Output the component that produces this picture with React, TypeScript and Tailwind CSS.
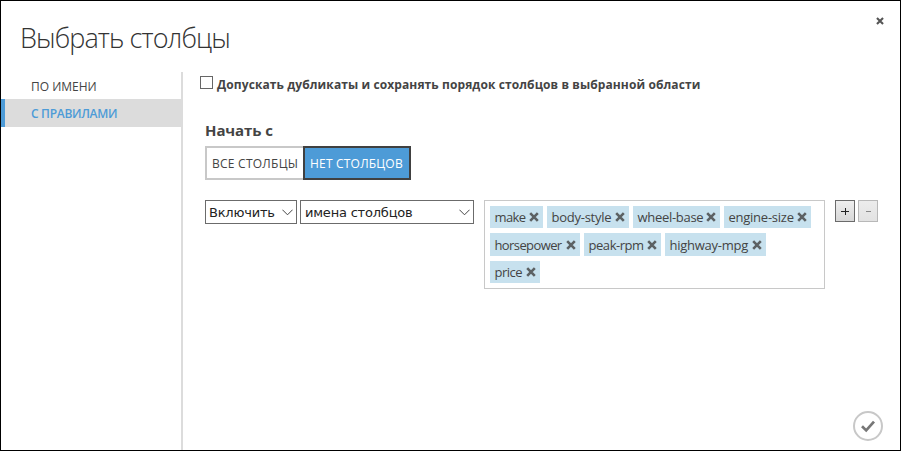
const rows = [
  {
    height: 'h-[22px]',
    chips: [
      { name: 'make', width: 'w-[53px]', tracking: 'tracking-[-0.65px]' },
      { name: 'body-style', width: 'w-[82px]', tracking: 'tracking-[-0.25px]' },
      { name: 'wheel-base', width: 'w-[87px]', tracking: 'tracking-[-0.3px]' },
      { name: 'engine-size', width: 'w-[87px]', tracking: 'tracking-[-0.25px]' },
    ],
  },
  {
    height: 'h-[23px]',
    chips: [
      { name: 'horsepower', width: 'w-[90px]', tracking: 'tracking-[-0.6px]' },
      { name: 'peak-rpm', width: 'w-[77px]', tracking: 'tracking-[-0.45px]' },
      { name: 'highway-mpg', width: 'w-[101px]', tracking: 'tracking-[-0.25px]' },
    ],
  },
  { height: 'h-[22px]', chips: [{ name: 'price', width: 'w-[50px]', tracking: 'tracking-[-0.5px]' }] },
];

function Cross({ className }: { className: string }) {
  return (
    <svg className={className} viewBox="0 0 10 10" fill="none" stroke="currentColor" strokeWidth="2.6">
      <path d="M1.2 1.2L8.8 8.8M8.8 1.2L1.2 8.8" />
    </svg>
  );
}

function Chip({ name, width, tracking }: { name: string; width: string; tracking: string }) {
  return (
    <div className={`flex h-full items-center justify-between bg-[#c7e1ee] pl-[4.5px] pr-[4px] ${width}`}>
      <span className={`whitespace-nowrap text-[13px] leading-[22px] ${tracking}`}>{name}</span>
      <Cross className="size-[10px] shrink-0 text-[#5c6163]" />
    </div>
  );
}

function Select({ label, width, inset }: { label: string; width: string; inset: string }) {
  return (
    <div className={`flex h-6 items-center justify-between border border-[#6b6b6b] pr-[3px] text-[#222] ${inset} ${width}`}>
      <span className="whitespace-nowrap pt-[2px] font-['DejaVu_Sans',sans-serif] text-[13px] leading-[20px] tracking-[-0.2px]">{label}</span>
      <svg className="h-[7px] w-[11px] shrink-0" viewBox="0 0 11 7" fill="none" stroke="#444" strokeWidth="1">
        <path d="M0.4 0.7L5.5 5.8L10.6 0.7" />
      </svg>
    </div>
  );
}

export default function App() {
  return (
    <div className="flex h-[451px] w-[901px] flex-col overflow-hidden border border-black bg-white font-['Open_Sans',sans-serif] text-[#444]">
      <header className="flex h-[70px] shrink-0 items-start justify-between pl-[19px] pr-[16px]">
        <h1 className="mt-[19px] whitespace-nowrap text-[27px] font-light leading-9 tracking-[-0.9px] text-[#333]">Выбрать столбцы</h1>
        <Cross className="mt-[16px] size-[8px] text-[#555]" />
      </header>
      <div className="flex min-h-0 flex-1">
        <nav className="mt-px flex w-[182px] shrink-0 flex-col border-r-2 border-[#dcdcdc] text-[12px]">
          <div className="flex h-[27px] items-center pl-[30px] pt-[2px]">
            <span className="whitespace-nowrap tracking-[0px]">ПО ИМЕНИ</span>
          </div>
          <div className="flex h-[28px] items-center border-l-4 border-[#4d9bd7] bg-[#dcdcdc] pl-[26px] pt-[2px] font-semibold text-[#4d9bd7]">
            <span className="whitespace-nowrap tracking-[-0.3px]">С ПРАВИЛАМИ</span>
          </div>
        </nav>
        <main className="flex min-w-0 flex-1 flex-col pl-[22px]">
          <label className="-ml-[5px] mt-[3px] flex h-[18px] items-center gap-[4px]">
            <span className="-mt-[2px] size-[13px] border border-[#666] bg-white" />
            <span className="whitespace-nowrap pt-[4px] text-[12px] font-bold tracking-[0.1px]">Допускать дубликаты и сохранять порядок столбцов в выбранной области</span>
          </label>
          <h2 className="mt-[26px] h-[24px] whitespace-nowrap text-[15px] font-bold leading-[24px] tracking-[-0.1px]">Начать с</h2>
          <div className="mt-[4px] flex h-[34px] text-[12px]">
            <div className="flex w-[98px] items-center border-2 border-r-0 border-[#c8c8c8] pl-[5px] pt-[2px]">
              <span className="whitespace-nowrap tracking-[0.25px]">ВСЕ СТОЛБЦЫ</span>
            </div>
            <div className="flex w-[108px] items-center border-2 border-[#404040] bg-[#4d9bd7] pl-[5px] pt-[2px] text-white">
              <span className="whitespace-nowrap tracking-[0.2px]">НЕТ СТОЛБЦОВ</span>
            </div>
          </div>
          <div className="mt-[20px] flex items-start">
            <Select label="Включить" width="w-[92px]" inset="pl-[3px]" />
            <div className="ml-[3px]">
              <Select label="имена столбцов" width="w-[174px]" inset="pl-[4px]" />
            </div>
            <div className="ml-[10px] flex h-[89px] w-[341px] flex-col gap-[5px] border border-[#c8c8c8] pl-[5px] pt-[5px]">
              {rows.map((row) => (
                <div key={row.chips[0].name} className={`flex gap-1 ${row.height}`}>
                  {row.chips.map((chip) => (
                    <Chip key={chip.name} {...chip} />
                  ))}
                </div>
              ))}
            </div>
            <button className="ml-[10px] flex h-[22px] w-[20px] items-center justify-center border border-[#6b6b6b] bg-linear-to-b from-[#eee] to-[#d8d8d8] text-[#222]">
              <svg className="size-[8px]" viewBox="0 0 8 8" stroke="currentColor" strokeWidth="1">
                <path d="M4.5 1V8M0 4.5H8" />
              </svg>
            </button>
            <button className="ml-[3px] flex h-[22px] w-[20px] items-center justify-center border border-[#b8b8b8] bg-linear-to-b from-[#ececec] to-[#e2e2e2] text-[#888]">
              <svg className="h-[8px] w-[6px]" viewBox="0 0 6 8" stroke="currentColor" strokeWidth="1">
                <path d="M1 4.5H6" />
              </svg>
            </button>
          </div>
          <div className="mb-[9px] mr-[17px] mt-auto flex justify-end">
            <svg className="size-[30px]" viewBox="0 0 30 30" fill="none">
              <circle cx="15" cy="15" r="14" stroke="#c8c8c8" strokeWidth="2" />
              <path d="M9 15.2L13.2 19.4L21 10.6" stroke="#777" strokeWidth="2.7" />
            </svg>
          </div>
        </main>
      </div>
    </div>
  );
}
